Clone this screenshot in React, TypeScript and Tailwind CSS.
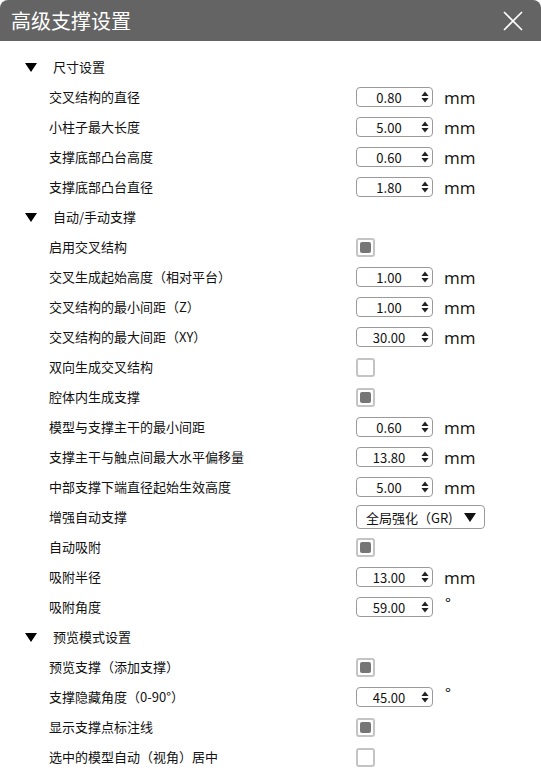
import React from 'react';

type Row =
  | { kind: 'header'; label: string }
  | { kind: 'spin'; label: string; value: string; unit: 'mm' | 'deg' }
  | { kind: 'check'; label: string; checked: boolean }
  | { kind: 'select'; label: string; value: string };

const rows: Row[] = [
  { kind: 'header', label: '尺寸设置' },
  { kind: 'spin', label: '交叉结构的直径', value: '0.80', unit: 'mm' },
  { kind: 'spin', label: '小柱子最大长度', value: '5.00', unit: 'mm' },
  { kind: 'spin', label: '支撑底部凸台高度', value: '0.60', unit: 'mm' },
  { kind: 'spin', label: '支撑底部凸台直径', value: '1.80', unit: 'mm' },
  { kind: 'header', label: '自动/手动支撑' },
  { kind: 'check', label: '启用交叉结构', checked: true },
  { kind: 'spin', label: '交叉生成起始高度（相对平台）', value: '1.00', unit: 'mm' },
  { kind: 'spin', label: '交叉结构的最小间距（Z）', value: '1.00', unit: 'mm' },
  { kind: 'spin', label: '交叉结构的最大间距（XY）', value: '30.00', unit: 'mm' },
  { kind: 'check', label: '双向生成交叉结构', checked: false },
  { kind: 'check', label: '腔体内生成支撑', checked: true },
  { kind: 'spin', label: '模型与支撑主干的最小间距', value: '0.60', unit: 'mm' },
  { kind: 'spin', label: '支撑主干与触点间最大水平偏移量', value: '13.80', unit: 'mm' },
  { kind: 'spin', label: '中部支撑下端直径起始生效高度', value: '5.00', unit: 'mm' },
  { kind: 'select', label: '增强自动支撑', value: '全局强化（GR)' },
  { kind: 'check', label: '自动吸附', checked: true },
  { kind: 'spin', label: '吸附半径', value: '13.00', unit: 'mm' },
  { kind: 'spin', label: '吸附角度', value: '59.00', unit: 'deg' },
  { kind: 'header', label: '预览模式设置' },
  { kind: 'check', label: '预览支撑（添加支撑）', checked: true },
  { kind: 'spin', label: '支撑隐藏角度（0-90°）', value: '45.00', unit: 'deg' },
  { kind: 'check', label: '显示支撑点标注线', checked: true },
  { kind: 'check', label: '选中的模型自动（视角）居中', checked: false },
];

function SpinBox({ value }: { value: string }) {
  return (
    <div className="flex items-center w-[77px] h-[20px] border border-[#9a9a9a] rounded-[4px] bg-white">
      <span className="flex-1 text-center text-[13px] leading-none text-[#111]">{value}</span>
      <svg width="8" height="12" viewBox="0 0 8 12" className="mr-[3px]">
        <path d="M4 0.5 L7.5 5 L0.5 5 Z" fill="#222" />
        <path d="M0.5 7 L7.5 7 L4 11.5 Z" fill="#222" />
      </svg>
    </div>
  );
}

function CheckBox({ checked }: { checked: boolean }) {
  return (
    <div className="flex items-center justify-center w-[19px] h-[19px] border-2 border-[#c4c4c4] rounded-[3px] bg-white">
      {checked && <div className="w-[11px] h-[11px] rounded-[2px] bg-[#767676]" />}
    </div>
  );
}

function Select({ value }: { value: string }) {
  return (
    <div className="flex items-center justify-between w-[129px] h-[24px] border border-[#9a9a9a] rounded-[4px] bg-white pl-[9px] pr-[8px]">
      <span className="text-[13px] leading-none text-[#111]">{value}</span>
      <svg width="12" height="9" viewBox="0 0 12 9">
        <path d="M0 0 L12 0 L6 9 Z" fill="#111" />
      </svg>
    </div>
  );
}

export default function App() {
  return (
    <div
      className="w-[541px] h-[773px] bg-white overflow-hidden"
      style={{ fontFamily: '"Noto Sans CJK SC", "Noto Sans", sans-serif' }}
    >
      <div className="flex items-center justify-between h-[41px] bg-[#646464] rounded-t-[8px] pl-[11px] pr-[18px]">
        <span className="text-[20px] text-white leading-none">高级支撑设置</span>
        <svg width="20" height="20" viewBox="0 0 20 20">
          <path d="M1 1 L19 19 M19 1 L1 19" stroke="#fff" strokeWidth="1.6" />
        </svg>
      </div>
      <div className="pt-[11px]">
        {rows.map((row, i) =>
          row.kind === 'header' ? (
            <div key={i} className="flex items-center h-[30px] pl-[25px]">
              <svg width="12" height="9" viewBox="0 0 12 9">
                <path d="M0 0 L12 0 L6 9 Z" fill="#000" />
              </svg>
              <span className="ml-[16px] text-[13px] text-[#111]">{row.label}</span>
            </div>
          ) : (
            <div key={i} className="flex items-center h-[30px]">
              <span className="w-[356px] pl-[49px] text-[13px] text-[#111]">{row.label}</span>
              {row.kind === 'spin' && (
                <>
                  <SpinBox value={row.value} />
                  {row.unit === 'mm' ? (
                    <span className="ml-[11px] text-[17px] text-[#111] leading-none" style={{ fontFamily: '"Open Sans", sans-serif' }}>mm</span>
                  ) : (
                    <span className="ml-[12px] text-[16px] text-[#111] leading-none -mt-[8px]">°</span>
                  )}
                </>
              )}
              {row.kind === 'check' && <CheckBox checked={row.checked} />}
              {row.kind === 'select' && <Select value={row.value} />}
            </div>
          )
        )}
      </div>
    </div>
  );
}
